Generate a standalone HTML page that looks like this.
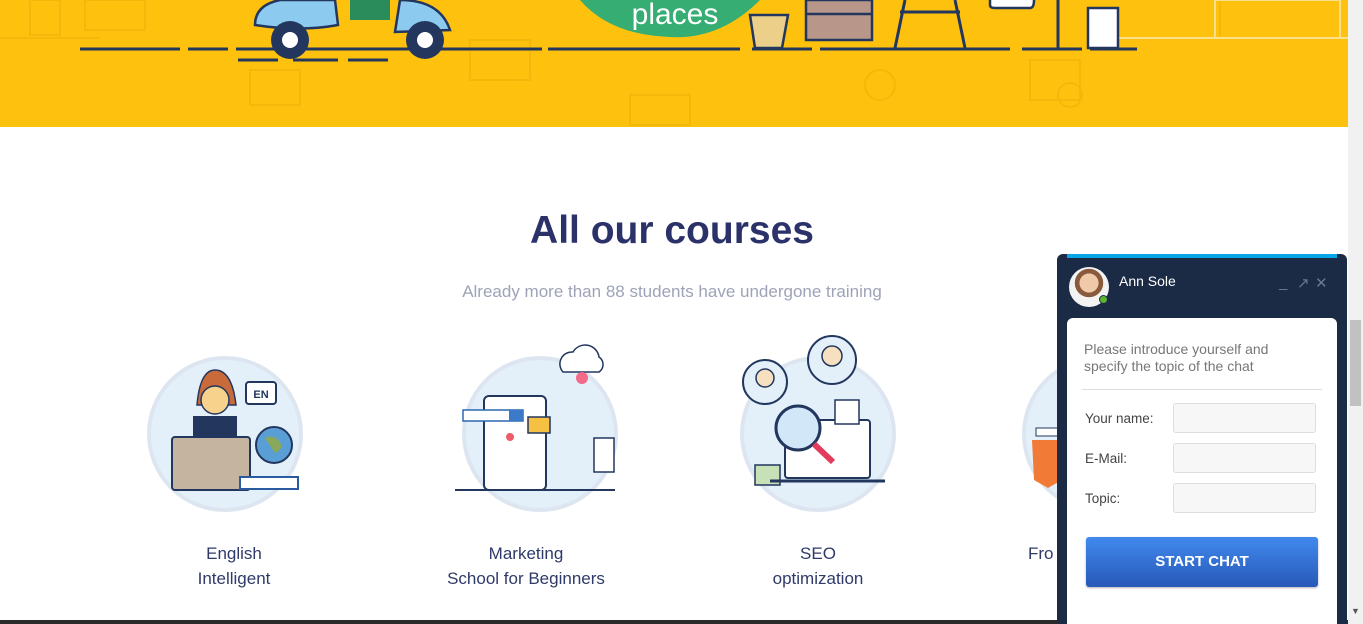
<!DOCTYPE html>
<html><head><meta charset="utf-8"><style>
*{margin:0;padding:0;box-sizing:border-box}
body{width:1363px;height:624px;overflow:hidden;background:#fff;font-family:"Liberation Sans",sans-serif;position:relative}
.hero{position:absolute;left:0;top:0;width:1348px;height:127px;background:#fec20e;overflow:hidden}
h1{position:absolute;left:0;width:1344px;top:209px;text-align:center;font-size:39px;font-weight:bold;color:#2b3269}
.sub{position:absolute;left:0;width:1344px;top:282px;text-align:center;font-size:17px;color:#9ea3b8}
.cap{position:absolute;top:541px;width:240px;text-align:center;font-size:17px;line-height:25px;color:#2f3a6a}
.scroll{position:absolute;left:1348px;top:0;width:15px;height:624px;background:#f1f1f1}
.thumb{position:absolute;left:1350px;top:320px;width:11px;height:86px;background:#c1c1c1}
.chat{position:absolute;left:1057px;top:254px;width:290px;height:370px;background:#1b2a45;border-radius:6px 6px 0 0}
.chat .bar{position:absolute;left:10px;top:0;width:270px;height:4px;background:#06a7e6}
.av{position:absolute;left:12px;top:13px;width:40px;height:40px;border-radius:50%;background:radial-gradient(circle at 50% 40%,#f0c9a8 0 30%,#8a5a3c 31% 45%,#f3f3f3 46%)}
.dot{position:absolute;left:42px;top:41px;width:9px;height:9px;border-radius:50%;background:#5cb531;border:1px solid #1b2a45}
.name{position:absolute;left:62px;top:19px;color:#fff;font-size:14px}
.ic{position:absolute;top:20px;color:#6a7890;font-size:15px}
.body{position:absolute;left:10px;top:64px;width:270px;height:306px;background:#fff;border-radius:6px 6px 0 0}
.intro{position:absolute;left:17px;top:23px;font-size:14px;line-height:17px;color:#777}
.hr{position:absolute;left:15px;top:71px;width:240px;height:1px;background:#ddd}
.lbl{position:absolute;left:18px;font-size:13.5px;color:#444}
.inp{position:absolute;left:106px;width:143px;height:30px;background:#f7f7f7;border:1px solid #ddd;border-radius:3px}
.btn{position:absolute;left:19px;top:219px;width:232px;height:50px;border-radius:3px;background:linear-gradient(#4189ee,#2759b8);color:#fff;font-weight:bold;font-size:15px;text-align:center;line-height:50px;box-shadow:0 1px 2px rgba(0,0,0,.3)}
</style></head><body>
<div class="hero">
<svg width="1348" height="127">
<g stroke="#f0b30a" fill="none" stroke-width="2" opacity=".7">
<rect x="30" y="0" width="30" height="35"/><rect x="85" y="0" width="60" height="30"/><line x1="0" y1="38" x2="100" y2="38"/>
<rect x="250" y="70" width="50" height="35"/><rect x="630" y="95" width="60" height="30"/><circle cx="880" cy="85" r="15"/><rect x="1030" y="60" width="50" height="40"/>
<rect x="470" y="40" width="60" height="40"/><circle cx="1070" cy="95" r="12"/><rect x="1220" y="0" width="120" height="38"/></g>
<g stroke="#fde08b" fill="none" stroke-width="2"><rect x="1215" y="0" width="125" height="38"/><line x1="1100" y1="38" x2="1348" y2="38"/></g>
<line x1="80" y1="49" x2="600" y2="49" stroke="#22365e" stroke-width="3" stroke-dasharray="100 8 40 8"/>
<line x1="280" y1="49" x2="1137" y2="49" stroke="#22365e" stroke-width="3" stroke-dasharray="190 12 60 8"/>
<line x1="238" y1="60" x2="400" y2="60" stroke="#22365e" stroke-width="3" stroke-dasharray="40 15 45 10"/>
<path d="M255 25 Q255 5 280 0 L335 0 L338 25 Q300 32 255 25Z" fill="#8ccaf0" stroke="#22365e" stroke-width="2.5"/>
<path d="M400 0 Q440 0 450 30 L395 32 Z" fill="#8ccaf0" stroke="#22365e" stroke-width="2.5"/>
<circle cx="290" cy="40" r="19" fill="#22365e"/><circle cx="290" cy="40" r="8" fill="#fff"/>
<circle cx="425" cy="40" r="19" fill="#22365e"/><circle cx="425" cy="40" r="8" fill="#fff"/>
<rect x="350" y="0" width="40" height="20" fill="#2a8c5a"/>
<path d="M580 0 L760 0 Q720 40 670 37 Q610 35 580 0Z" fill="#35ad73"/>
<text x="675" y="24" text-anchor="middle" fill="#fff" font-size="30" font-family="Liberation Sans">places</text>
<path d="M750 15 L788 15 L782 48 L755 48Z" fill="#ecd08a" stroke="#22365e" stroke-width="2.5"/>
<rect x="806" y="0" width="66" height="40" fill="#b8978a" stroke="#22365e" stroke-width="2.5"/><line x1="806" y1="14" x2="872" y2="14" stroke="#22365e" stroke-width="2.5"/>
<path d="M905 0 L895 48 M955 0 L965 48 M900 12 L960 12" stroke="#22365e" stroke-width="3" fill="none"/>
<path d="M990 0 L990 5 Q990 8 995 8 L1030 8 Q1034 8 1034 0" stroke="#22365e" stroke-width="2.5" fill="#fff"/>
<line x1="1058" y1="0" x2="1058" y2="48" stroke="#22365e" stroke-width="3"/>
<rect x="1088" y="8" width="30" height="40" fill="#fff" stroke="#22365e" stroke-width="2.5"/>
</svg></div>
<h1>All our courses</h1>
<div class="sub">Already more than 88 students have undergone training</div>

<svg style="position:absolute;left:0;top:330px" width="1348" height="200">
<g fill="#e3f0fa" stroke="#dde6f0" stroke-width="4">
<circle cx="225" cy="104" r="76"/><circle cx="540" cy="104" r="76"/><circle cx="818" cy="104" r="76"/><circle cx="1100" cy="104" r="76"/></g>
<path d="M197 75 Q200 40 215 40 Q232 40 236 75Z" fill="#c86a3a" stroke="#22365e" stroke-width="1.5"/>
<circle cx="215" cy="70" r="14" fill="#f6d28d" stroke="#22365e" stroke-width="1.5"/>
<rect x="193" y="86" width="44" height="22" fill="#22365e"/>
<rect x="172" y="107" width="78" height="53" rx="3" fill="#c4b4a0" stroke="#22365e" stroke-width="2"/>
<rect x="246" y="52" width="30" height="22" rx="3" fill="#fff" stroke="#22365e" stroke-width="2"/>
<text x="261" y="68" text-anchor="middle" font-size="11" font-weight="bold" fill="#22365e" font-family="Liberation Sans">EN</text>
<circle cx="274" cy="115" r="18" fill="#5a9ed6" stroke="#22365e" stroke-width="2"/><path d="M265 108q8-4 14 3t-4 12" fill="#8aa85a"/>
<rect x="240" y="147" width="58" height="12" fill="#fff" stroke="#2a5aa0" stroke-width="2"/>
<rect x="484" y="66" width="62" height="94" rx="5" fill="#fff" stroke="#22365e" stroke-width="2"/>
<rect x="463" y="80" width="60" height="11" fill="#fff" stroke="#2a68b0" stroke-width="1.5"/><rect x="509" y="80" width="14" height="11" fill="#3a7ac8"/>
<rect x="528" y="87" width="22" height="16" fill="#f6c143" stroke="#22365e" stroke-width="1.5"/>
<path d="M563 42a12 12 0 0 1 10-20a14 14 0 0 1 26 5a9 9 0 0 1 0 15z" fill="#fff" stroke="#22365e" stroke-width="1.5"/><circle cx="582" cy="48" r="6" fill="#f36a8a"/>
<circle cx="510" cy="107" r="4" fill="#ee5b6a"/>
<rect x="594" y="108" width="20" height="34" fill="#fff" stroke="#22365e" stroke-width="1.5"/>
<line x1="455" y1="160" x2="615" y2="160" stroke="#22365e" stroke-width="2"/>
<circle cx="765" cy="52" r="22" fill="#e3f0fa" stroke="#22365e" stroke-width="2"/><circle cx="832" cy="30" r="24" fill="#e3f0fa" stroke="#22365e" stroke-width="2"/>
<circle cx="765" cy="48" r="9" fill="#f6e0c0" stroke="#22365e" stroke-width="1.5"/><circle cx="832" cy="26" r="10" fill="#f6e0c0" stroke="#22365e" stroke-width="1.5"/>
<rect x="785" y="90" width="85" height="58" rx="3" fill="#fff" stroke="#22365e" stroke-width="2"/>
<circle cx="798" cy="98" r="22" fill="#d2e8f8" stroke="#22365e" stroke-width="3"/><line x1="814" y1="114" x2="833" y2="132" stroke="#e23c5c" stroke-width="6"/>
<rect x="835" y="70" width="24" height="24" fill="#fff" stroke="#22365e" stroke-width="1.5"/>
<rect x="755" y="135" width="25" height="20" fill="#c8e0b8" stroke="#22365e" stroke-width="1.5"/>
<line x1="770" y1="151" x2="885" y2="151" stroke="#22365e" stroke-width="3"/>
<path d="M1032 110 L1066 110 L1062 150 L1048 158 L1034 150Z" fill="#f07a36"/>
<rect x="1036" y="98" width="30" height="8" fill="#fff" stroke="#22365e"/>
</svg>
<div class="cap" style="left:114px">English<br>Intelligent</div>
<div class="cap" style="left:406px">Marketing<br>School for Beginners</div>
<div class="cap" style="left:698px">SEO<br>optimization</div>
<div class="cap" style="left:1028px;width:40px;text-align:left">Fro</div>
<div style="position:absolute;left:0;top:620px;width:1348px;height:4px;background:#2a2a2a"></div>
<div class="scroll"></div><div class="thumb"></div>
<div style="position:absolute;left:1351px;top:606px;color:#555;font-size:9px">▼</div>
<div class="chat"><div class="bar"></div><div class="av"></div><div class="dot"></div>
<div class="name">Ann Sole</div>
<div class="ic" style="left:222px">_</div><div class="ic" style="left:240px">↗</div><div class="ic" style="left:258px">✕</div>
<div class="body">
<div class="intro">Please introduce yourself and<br>specify the topic of the chat</div>
<div class="hr"></div>
<div class="lbl" style="top:93px">Your name:</div><div class="inp" style="top:85px"></div>
<div class="lbl" style="top:133px">E-Mail:</div><div class="inp" style="top:125px"></div>
<div class="lbl" style="top:173px">Topic:</div><div class="inp" style="top:165px"></div>
<div class="btn">START CHAT</div>
</div></div>
</body></html>
